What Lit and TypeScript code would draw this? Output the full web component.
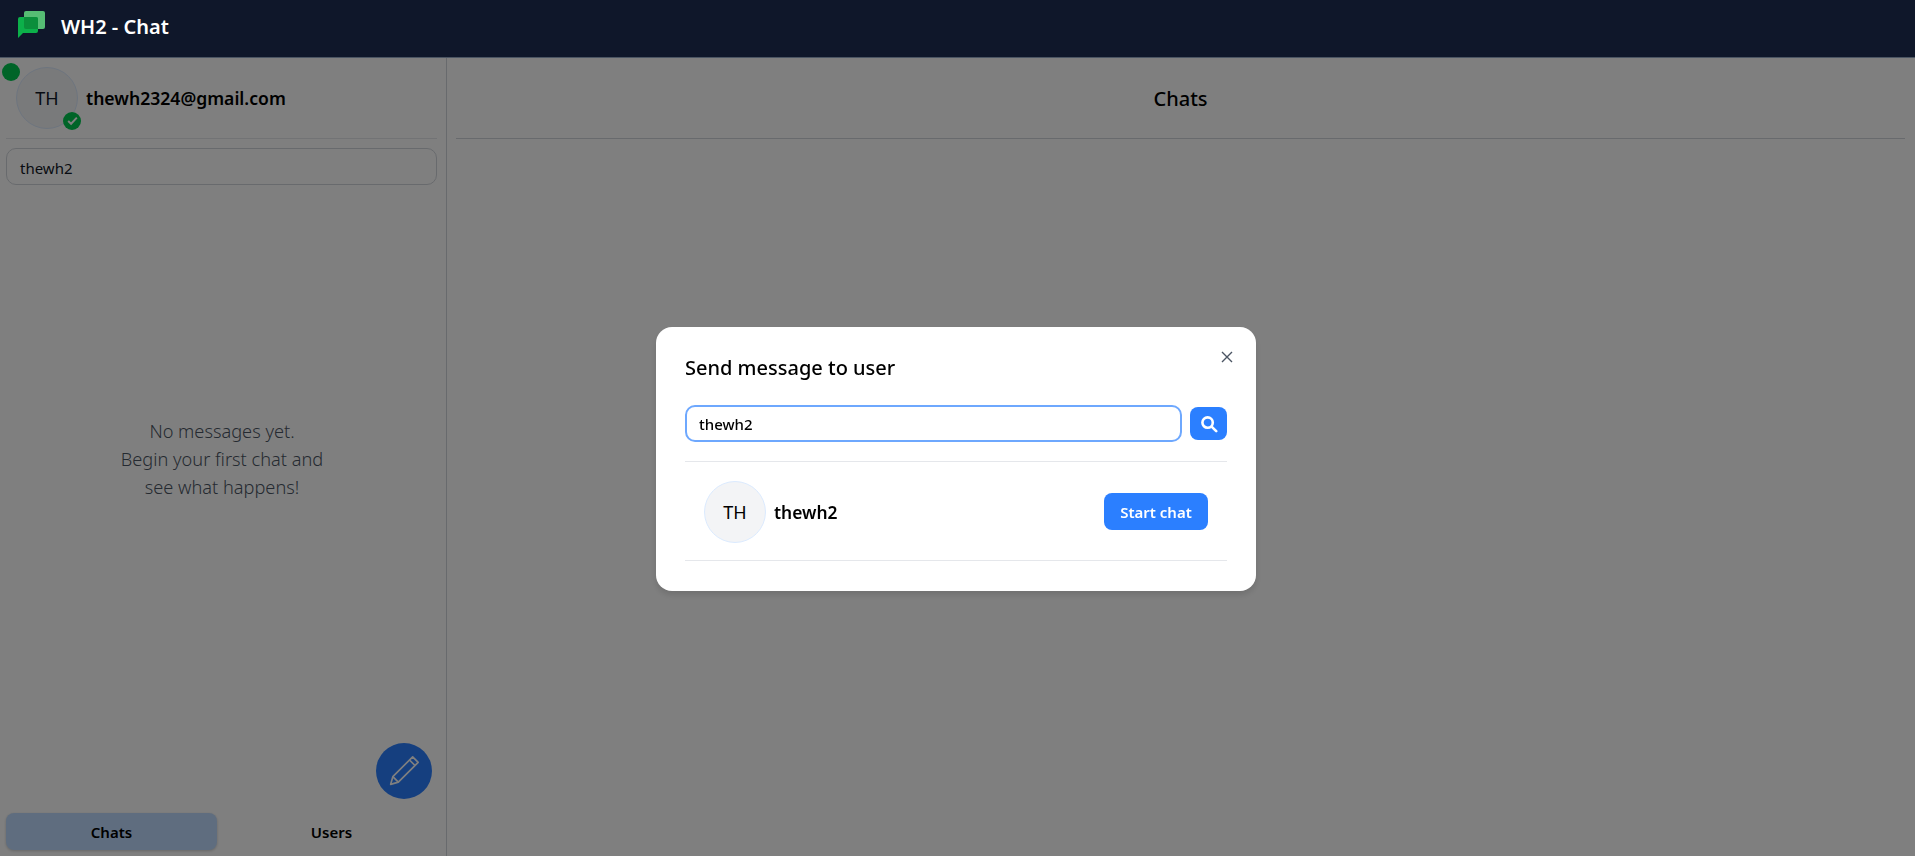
import { LitElement, css, html, type TemplateResult } from 'lit';
import { customElement, state } from 'lit/decorators.js';

@customElement('app-root')
export class AppRoot extends LitElement {
  @state() private tab: 'chats' | 'users' = 'chats';
  @state() private query = 'thewh2';

  private logo(): TemplateResult {
    return html`<svg class="logo" width="28" height="28" viewBox="0 0 28 28">
      <path d="M8 0h17a2 2 0 0 1 2 2v14a2 2 0 0 1-2 2H8a2 2 0 0 1-2-2V2a2 2 0 0 1 2-2z" fill="#56bd74"/>
      <path d="M2 6h16a2 2 0 0 1 2 2v12a2 2 0 0 1-2 2H5L0 27V8a2 2 0 0 1 2-2z" fill="#0cb04a"/>
      <path d="M6 6h12a2 2 0 0 1 2 2v10H8a2 2 0 0 1-2-2z" fill="#0a8f3b"/>
    </svg>`;
  }

  override render(): TemplateResult {
    return html`
      <header class="topbar">
        ${this.logo()}
        <span class="brand">WH2 - Chat</span>
      </header>
      <div class="page">
        <aside class="sidebar">
          <div class="me">
            <div class="avatar">
              TH
              <span class="dot"></span>
              <span class="verified">
                <svg width="13" height="13" viewBox="0 0 12 12" fill="none" stroke="#fff" stroke-width="1.8">
                  <path d="M2 6.4l2.7 2.6L10 3.4"/>
                </svg>
              </span>
            </div>
            <span class="email">thewh2324@gmail.com</span>
          </div>
          <div class="filter">thewh2</div>
          <div class="empty">No messages yet.<br />Begin your first chat and<br />see what happens!</div>
          <div class="fab-row">
            <button class="fab" aria-label="New chat">
              <svg width="40" height="40" viewBox="0 0 24 24" fill="none" stroke="#fff" stroke-width="1" stroke-linejoin="round">
                <path d="M4 20l1.3-4.6L17.2 3.5l3.3 3.3L8.6 18.7z"/>
                <path d="M15.3 5.4l3.3 3.3M5.3 15.4l3.3 3.3"/>
              </svg>
            </button>
          </div>
          <nav class="tabs">
            <button class="tab ${this.tab === 'chats' ? 'active' : ''}" @click=${() => (this.tab = 'chats')}>Chats</button>
            <button class="tab ${this.tab === 'users' ? 'active' : ''}" @click=${() => (this.tab = 'users')}>Users</button>
          </nav>
        </aside>
        <main class="main">
          <h2 class="main-title">Chats</h2>
        </main>
      </div>

      <div class="overlay">
        <div class="modal">
          <button class="close" aria-label="Close">
            <svg width="12" height="12" viewBox="0 0 12 12" fill="none" stroke="#4b5563" stroke-width="1.4">
              <path d="M1 1l10 10M11 1L1 11"/>
            </svg>
          </button>
          <h3 class="modal-title">Send message to user</h3>
          <div class="search">
            <input class="search-input" .value=${this.query} />
            <button class="search-btn" aria-label="Search">
              <svg width="18" height="18" viewBox="0 0 18 18" fill="none" stroke="#fff" stroke-width="2.6">
                <circle cx="7.6" cy="7.6" r="5.2"/>
                <path d="M11.6 11.6l4.6 4.6" stroke-linecap="round"/>
              </svg>
            </button>
          </div>
          <div class="result">
            <div class="avatar small">TH</div>
            <span class="result-name">thewh2</span>
            <button class="start">Start chat</button>
          </div>
        </div>
      </div>
    `;
  }

  static override styles = css`
    :host {
      display: block;
      height: 856px;
      font-family: 'Noto Sans', 'Open Sans', sans-serif;
      color: #000;
      background: #fff;
      overflow: hidden;
    }
    button { font-family: inherit; border: 0; cursor: pointer; }
    .topbar {
      position: relative;
      z-index: 60;
      height: 57px;
      display: flex;
      align-items: center;
      gap: 15px;
      padding: 0 18px;
      background: #0f172a;
      border-bottom: 1px solid #4b5563;
    }
    .logo { margin-top: -7px; }
    .brand { color: #fff; font-size: 20px; font-weight: 600; margin-top: -5px; }
    .page { display: flex; height: 798px; }
    .sidebar {
      width: 446px;
      flex: none;
      border-right: 1px solid #d1d5db;
      display: flex;
      flex-direction: column;
    }
    .me {
      display: flex;
      align-items: center;
      gap: 8px;
      height: 80px;
      margin: 0 9px 0 6px;
      padding-left: 10px;
      border-bottom: 1px solid #e5e7eb;
    }
    .avatar {
      position: relative;
      width: 60px;
      height: 60px;
      margin-top: -1px;
      flex: none;
      display: flex;
      align-items: center;
      justify-content: center;
      border-radius: 50%;
      border: 1px solid #dbeafe;
      background: #f3f4f6;
      font-size: 18px;
      color: #111827;
    }
    .dot {
      position: absolute;
      top: -5px;
      left: -15px;
      width: 18px;
      height: 18px;
      border-radius: 50%;
      background: #00c950;
    }
    .verified {
      position: absolute;
      left: 46px;
      top: 44px;
      width: 18px;
      height: 18px;
      border-radius: 50%;
      background: #00c950;
      display: flex;
      align-items: center;
      justify-content: center;
    }
    .email { font-size: 17.6px; font-weight: 600; color: #000; }
    .filter {
      height: 37px;
      box-sizing: border-box;
      margin: 9px 9px 0 6px;
      padding: 2px 13px 0;
      display: flex;
      align-items: center;
      border: 1px solid #d1d5db;
      border-radius: 10px;
      font-size: 15px;
      color: #111827;
    }
    .empty {
      flex: 1;
      text-align: center;
      padding: 232px 2px 0 0;
      font-size: 18.2px;
      line-height: 28px;
      color: #4b5563;
      font-weight: 300;
    }
    .fab-row { display: flex; justify-content: flex-end; padding: 0 14px 14px 0; }
    .fab {
      width: 56px;
      height: 56px;
      border-radius: 50%;
      background: #2b7fff;
      display: flex;
      align-items: center;
      justify-content: center;
      padding: 0;
    }
    .tabs { display: grid; grid-template-columns: 211px 211px; gap: 9px; padding: 0 0 6px 6px; }
    .tab {
      height: 37px;
      border-radius: 8px;
      background: transparent;
      font-size: 15px;
      font-weight: 600;
      color: #000;
    }
    .tab.active { background: #bfdbfe; box-shadow: 0 1px 3px rgba(0, 0, 0, 0.2); }
    .main { flex: 1; padding: 0 10px 0 9px; }
    .main-title {
      margin: 0;
      height: 80px;
      display: flex;
      align-items: center;
      justify-content: center;
      border-bottom: 1px solid #d1d5db;
      font-size: 20px;
      font-weight: 500;
    }
    .overlay {
      position: fixed;
      inset: 0;
      z-index: 50;
      background: rgba(0, 0, 0, 0.5);
      display: flex;
      align-items: flex-start;
      justify-content: center;
    }
    .modal {
      position: relative;
      width: 600px;
      height: 264px;
      box-sizing: border-box;
      margin: 327px 0 0 -3px;
      padding: 25px 29px 0;
      background: #fff;
      border-radius: 16px;
      box-shadow: 0 4px 6px rgba(0, 0, 0, 0.12);
    }
    .close {
      position: absolute;
      top: 24px;
      right: 23px;
      padding: 0;
      background: none;
      display: flex;
    }
    .modal-title { margin: 0; font-size: 20px; line-height: 32px; font-weight: 500; color: #000; }
    .search {
      display: flex;
      align-items: center;
      gap: 8px;
      margin-top: 21px;
      padding-bottom: 19px;
      border-bottom: 1px solid #e5e7eb;
    }
    .search-input {
      flex: 1;
      min-width: 0;
      height: 37px;
      box-sizing: border-box;
      padding: 0 12px;
      border: 2px solid #6ea8fe;
      border-radius: 10px;
      outline: none;
      font: 500 15px 'Noto Sans', sans-serif;
      color: #000;
    }
    .search-btn {
      width: 37px;
      height: 33px;
      border-radius: 8px;
      background: #2b7fff;
      display: flex;
      align-items: center;
      justify-content: center;
      padding: 0;
    }
    .result {
      display: flex;
      align-items: center;
      gap: 8px;
      height: 97px;
      padding: 1px 19px 0;
      border-bottom: 1px solid #e5e7eb;
    }
    .avatar.small { margin: 0; color: #000; }
    .result-name { font-size: 17.4px; font-weight: 600; color: #000; }
    .start {
      margin-left: auto;
      width: 104px;
      height: 37px;
      border-radius: 8px;
      background: #2b7fff;
      color: #fff;
      font-size: 15px;
      font-weight: 600;
      padding: 0;
    }
  `;
}

declare global {
  interface HTMLElementTagNameMap {
    'app-root': AppRoot;
  }
}
